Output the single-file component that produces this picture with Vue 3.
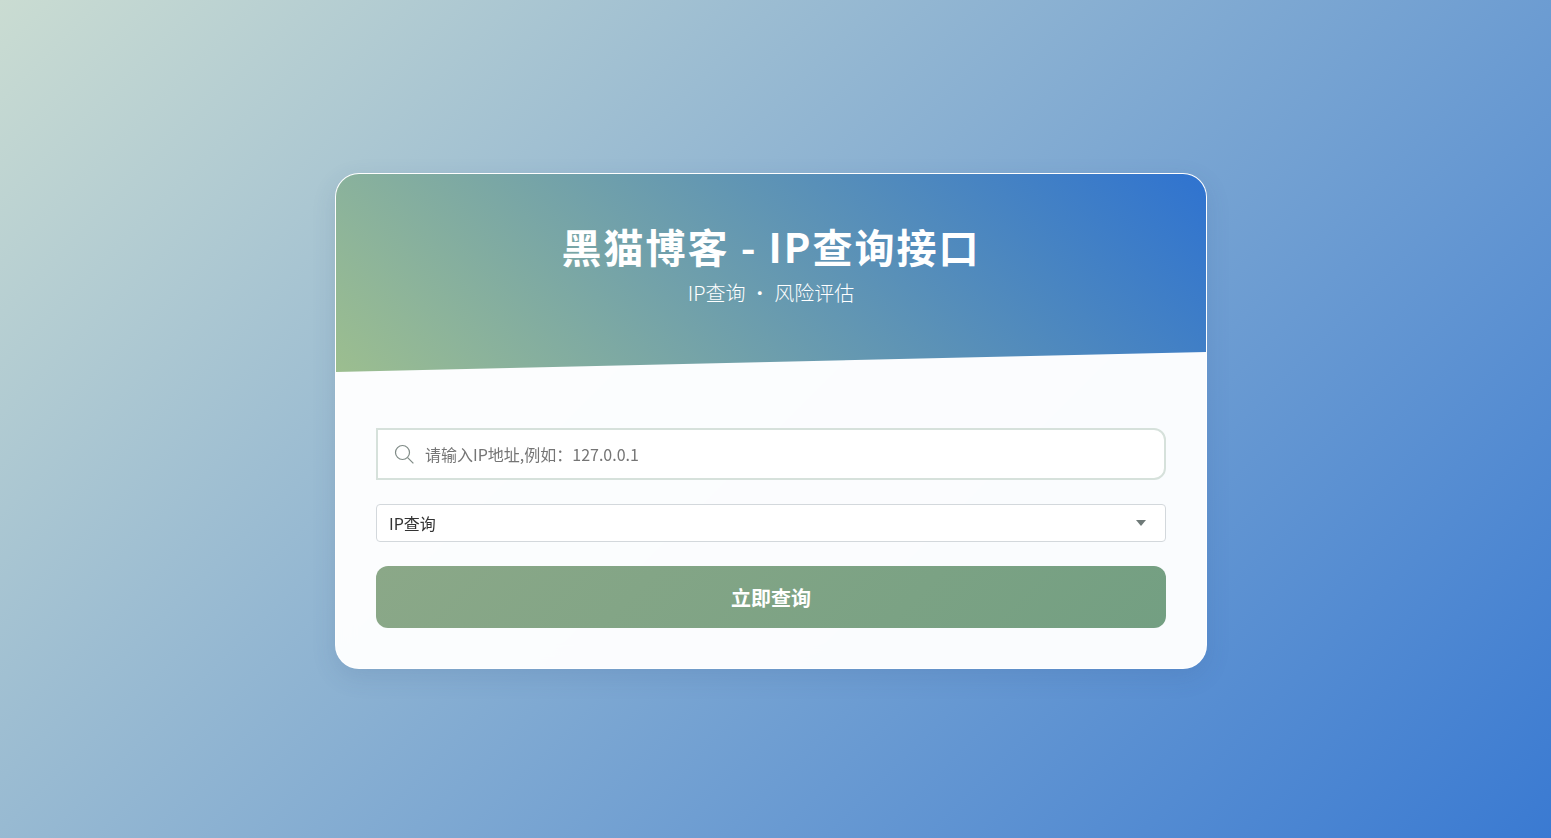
<script setup>
import { ref } from 'vue'
const ip = ref('')
const mode = ref('ip')
</script>

<template>
  <main class="page">
    <section class="card">
      <header class="hero">
        <h1 class="title">黑猫博客 - IP查询接口</h1>
        <p class="subtitle">IP查询 · 风险评估</p>
      </header>
      <form class="form" @submit.prevent>
        <label class="search">
          <svg class="search-icon" viewBox="0 0 20 20" width="20" height="20" fill="none" stroke="#7f8a86" stroke-width="1.2">
            <circle cx="8.5" cy="8.5" r="7" />
            <path d="M13.6 13.6 19.4 19.4" />
          </svg>
          <input v-model="ip" class="search-input" type="text" placeholder="请输入IP地址,例如：127.0.0.1" />
        </label>
        <div class="select-wrap">
          <select v-model="mode" class="select">
            <option value="ip">IP查询</option>
          </select>
          <span class="caret"></span>
        </div>
        <button class="submit" type="submit">立即查询</button>
      </form>
    </section>
  </main>
</template>

<style>
html, body { margin: 0; padding: 0; }
</style>

<style scoped>
.page {
  box-sizing: border-box;
  min-height: 838px;
  padding: 4px 9px 0 0;
  display: flex;
  align-items: center;
  justify-content: center;
  background: linear-gradient(135deg, #cadcd2 0%, #3a7ad2 100%);
  font-family: "Noto Sans CJK SC", "Noto Sans", sans-serif;
}
.card {
  box-sizing: border-box;
  width: 872px;
  height: 496px;
  background: rgba(255, 255, 255, 0.97);
  border: 1px solid rgba(255, 255, 255, 0.9);
  border-radius: 24px;
  overflow: hidden;
  box-shadow: 0 8px 24px rgba(47, 80, 130, 0.14);
  backdrop-filter: blur(10px);
}
.hero {
  box-sizing: border-box;
  height: 198px;
  padding-top: 43px;
  text-align: center;
  color: #fff;
  background: linear-gradient(48deg, #9cbe8f 0%, #8db49a 14%, #2f73d0 100%);
  clip-path: polygon(0 0, 100% 0, 100% 178px, 0 100%);
}
.title {
  margin: 0;
  font-size: 40px;
  line-height: 58px;
  font-weight: 700;
  letter-spacing: 2px;
}
.subtitle {
  margin: 3px 0 0;
  font-size: 20px;
  line-height: 30px;
  font-weight: 300;
}
.form {
  display: flex;
  flex-direction: column;
  padding: 56px 40px 0;
}
.search {
  box-sizing: border-box;
  height: 52px;
  display: flex;
  align-items: center;
  gap: 11px;
  padding: 0 16px;
  background: #fff;
  border: 2px solid #d6e1db;
  border-radius: 0 12px 12px 0;
}
.search-icon { flex: none; }
.search-input {
  flex: 1;
  min-width: 0;
  border: 0;
  outline: 0;
  padding: 0;
  background: transparent;
  font: inherit;
  font-size: 16px;
  color: #333;
}
.search-input::placeholder { color: #757575; opacity: 1; }
.select-wrap {
  position: relative;
  margin-top: 24px;
}
.select {
  box-sizing: border-box;
  width: 100%;
  height: 38px;
  display: block;
  padding: 0 12px;
  appearance: none;
  background: #fff;
  border: 1px solid #d3d8dc;
  border-radius: 4px;
  outline: 0;
  font: inherit;
  font-size: 16px;
  color: #333;
}
.caret {
  position: absolute;
  right: 20px;
  top: 16px;
  width: 0;
  height: 0;
  border-left: 5.5px solid transparent;
  border-right: 5.5px solid transparent;
  border-top: 6px solid #6f7a78;
  pointer-events: none;
}
.submit {
  height: 62px;
  margin-top: 24px;
  border: 0;
  border-radius: 12px;
  background: linear-gradient(135deg, #8ba888 0%, #739f82 100%);
  color: #fff;
  font: inherit;
  font-size: 20px;
  font-weight: 700;
}
</style>
